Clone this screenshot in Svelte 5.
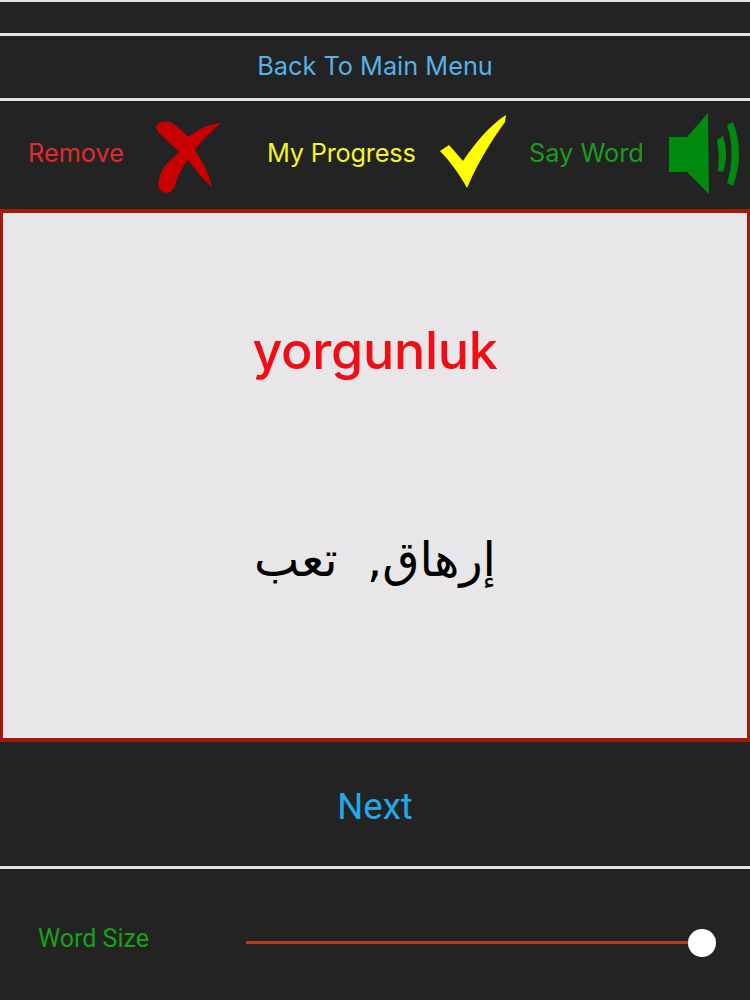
<script>
    let wordSize = $state(1);
</script>

<div class="page">
    <div class="bar top"></div>

    <div class="bar menu">
        <span class="link">Back To Main Menu</span>
    </div>

    <div class="bar actions">
        <svg class="icons" viewBox="0 0 750 111" aria-hidden="true">
            <g transform="translate(0 -98)">
                <path
                    fill="#c80000"
                    d="M156 128 C157 122 165 120 172 123 C178 127 184 132 188 137 C197 130 208 124 221 123 C212 131 201 141 195 150 C202 161 209 173 212 187 C204 181 196 170 188 160 C181 169 177 178 175 186 C172 193 165 195 160 190 C156 184 160 173 165 166 C170 160 175 156 179 152 C172 144 160 136 156 128 Z"
                />
                <path
                    fill="#ffff00"
                    d="M440 151 L449 145 L463 161 C475 143 490 125 506 115 L505 122 C492 140 478 162 467 188 C460 175 450 161 440 151 Z"
                />
                <path fill="#008a0e" d="M669 137 L687 137 L708 113 L709 194 L687 172 L669 172 Z" />
                <path fill="#008a0e" d="M717 140 L723 136 C727 148 727 162 723 172 L718 171 C719 160 719 150 717 140 Z" />
                <path fill="#008a0e" d="M727 125 L733 122 C741 143 741 165 733 186 L727 183 C733 164 733 143 727 125 Z" />
            </g>
        </svg>
        <span class="action remove">Remove</span>
        <span class="action progress">My Progress</span>
        <span class="action say">Say Word</span>
    </div>

    <div class="card">
        <div class="word">yorgunluk</div>
        <div class="translation" dir="rtl">إرهاق, تعب</div>
    </div>

    <div class="next-row">
        <span class="next">Next</span>
    </div>

    <div class="bar size">
        <span class="size-label">Word Size</span>
        <div class="slider">
            <div class="track" style="flex-grow: {wordSize}"></div>
            <div class="thumb"></div>
        </div>
    </div>
</div>

<style>
    :global(body) {
        background: #232323;
    }

    .page {
        display: flex;
        flex-direction: column;
        width: 750px;
        height: 1000px;
        background: #232323;
        font-family: Inter, "Liberation Sans", sans-serif;
    }

    .bar {
        display: flex;
        align-items: center;
        box-sizing: border-box;
        border-top: 3px solid #e2e2e2;
    }

    .top {
        height: 33px;
        border-top-width: 2px;
    }

    .menu {
        justify-content: center;
        height: 65px;
        padding-bottom: 4px;
    }

    .link {
        font-size: 25.3px;
        color: #56b2e6;
    }

    .actions {
        position: relative;
        height: 111px;
        padding: 0 0 5px 28px;
    }

    .icons {
        position: absolute;
        left: 0;
        top: -3px;
        width: 750px;
        height: 111px;
    }

    .action {
        font-size: 25.3px;
    }

    .remove {
        color: #e02b2b;
        width: 239px;
    }

    .progress {
        color: #f4f32c;
        width: 262px;
        letter-spacing: -0.2px;
    }

    .say {
        color: #1c9c1c;
    }

    .card {
        display: flex;
        flex-direction: column;
        align-items: center;
        box-sizing: border-box;
        height: 533px;
        padding-top: 103px;
        background: #e8e6e9;
        border: solid #a01b0c;
        border-width: 4px 3px;
    }

    .word {
        font-size: 52px;
        font-weight: 450;
        letter-spacing: -0.3px;
        line-height: 70px;
        color: #f00d14;
    }

    .translation {
        margin-top: 138px;
        font-family: "DejaVu Sans", sans-serif;
        font-size: 48px;
        word-spacing: 14px;
        line-height: 70px;
        color: #000;
    }

    .next-row {
        display: flex;
        align-items: center;
        justify-content: center;
        height: 124px;
        padding-top: 5px;
        box-sizing: border-box;
    }

    .next {
        font-family: Roboto, sans-serif;
        font-size: 36.5px;
        color: #22a9ea;
    }

    .size {
        height: 134px;
        padding: 0 34px 2px 38px;
    }

    .size-label {
        width: 208px;
        margin-top: 9px;
        font-family: Roboto, sans-serif;
        font-size: 25px;
        color: #18a018;
    }

    .slider {
        display: flex;
        flex: 1;
        align-items: center;
        margin-top: 18px;
    }

    .track {
        height: 3px;
        background: #b93a22;
    }

    .thumb {
        flex: none;
        width: 28px;
        height: 28px;
        border-radius: 50%;
        background: #fff;
    }
</style>
